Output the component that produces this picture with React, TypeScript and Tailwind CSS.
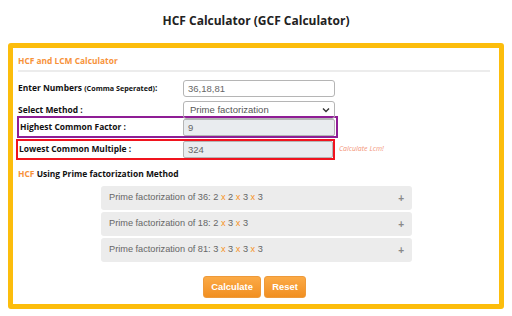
import React from 'react';

const factors = [
    { n: 36, f: [2, 2, 3, 3] },
    { n: 18, f: [2, 3, 3] },
    { n: 81, f: [3, 3, 3, 3] },
];

const label = 'text-[8.45px] font-bold text-[#111]';
const readonlyInput = "h-[17px] border border-[#b5b5b5] rounded-[2px] bg-[#e9ecef] px-[4px] text-[9.5px] text-[#666] leading-[15px] font-['Liberation_Sans',Arial,sans-serif]";
const btn = "h-[22px] rounded-[3px] border border-[#ee9a3a] bg-gradient-to-b from-[#fbaa45] to-[#f18f1f] text-white text-[9.4px] font-bold";

export default function App() {
    return (
        <div className="w-[512px] h-[316px] bg-white overflow-hidden font-['Open_Sans','Liberation_Sans',sans-serif]">
            <h1 className="h-[43px] pt-[12px] text-center text-[12px] font-bold text-[#222] leading-[18px]">
                HCF Calculator (GCF Calculator)
            </h1>

            <div className="mx-[8px] h-[266px] border-[5px] border-[#fcbd0c] rounded-[3px] px-[5px] pt-[6px]">
                <div className="text-[8.4px] font-bold text-[#f7923a] leading-[14px] pb-[2px] border-b-[2px] border-[#ececec] mr-[4px]">
                    HCF and LCM Calculator
                </div>

                {/* Form */}
                <div className="mt-[8px] flex items-center h-[17px]">
                    <div className={`w-[165px] ${label}`}>
                        Enter Numbers <span className="text-[7.2px]">(Comma Seperated)</span>:
                    </div>
                    <div className="w-[152px] h-[17px] border border-[#b5b5b5] rounded-[3px] px-[4px] text-[9.5px] text-[#666] leading-[15px] font-['Liberation_Sans',Arial,sans-serif]">
                        36,18,81
                    </div>
                </div>

                <div className="mt-[4px] flex items-center h-[18px]">
                    <div className={`w-[165px] ${label}`}>Select Method :</div>
                    <div className="w-[152px] h-[18px] border border-[#b5b5b5] rounded-[3px] pl-[6px] pr-[4px] flex items-center justify-between text-[9.5px] text-[#555] font-['Liberation_Sans',Arial,sans-serif]">
                        <span>Prime factorization</span>
                        <svg width="8" height="6" viewBox="0 0 8 6">
                            <path d="M1 1.5 L4 4.5 L7 1.5" fill="none" stroke="#333" strokeWidth="1.4" />
                        </svg>
                    </div>
                </div>

                <div className="mt-[-3px] ml-[-1px] w-[321px] h-[22px] border-2 border-[#8f1d95] flex items-center">
                    <div className={`w-[164px] pl-[1px] ${label}`}>Highest Common Factor :</div>
                    <div className={`w-[152px] ${readonlyInput}`}>9</div>
                </div>

                <div className="mt-[1px] flex items-center">
                    <div className="ml-[-2px] w-[319px] h-[21px] border-2 border-[#f0141e] flex items-center">
                        <div className={`w-[165px] pl-[1px] ${label}`}>Lowest Common Multiple :</div>
                        <div className={`w-[150px] ${readonlyInput}`}>324</div>
                    </div>
                    <span className="ml-[4px] text-[7px] italic text-[#f3957a]">Calculate Lcm!</span>
                </div>

                <div className={`mt-[7px] leading-[14px] ${label}`}>
                    <span className="text-[#f7923a]">HCF</span> Using Prime factorization Method
                </div>

                {/* Prime factorization */}
                <div className="mt-[5px] ml-[83px] w-[311px] flex flex-col gap-[2px] font-['Liberation_Sans',Arial,sans-serif]">
                    {factors.map(item => (
                        <div key={item.n} className="h-[24px] bg-[#ececec] rounded-[3px] px-[8px] flex items-center justify-between text-[9.2px] text-[#666]">
                            <span>
                                Prime factorization of {item.n}:{' '}
                                {item.f.map((x, i) => (
                                    <React.Fragment key={i}>
                                        {i > 0 && <span className="text-[#f7931e]"> x </span>}
                                        {x}
                                    </React.Fragment>
                                ))}
                            </span>
                            <span className="text-[10px] font-bold text-[#888]">+</span>
                        </div>
                    ))}
                </div>

                {/* Actions */}
                <div className="mt-[14px] flex justify-center gap-[3px] pr-[3px] font-['Liberation_Sans',Arial,sans-serif]">
                    <button className={`w-[58px] ${btn}`}>Calculate</button>
                    <button className={`w-[42px] ${btn}`}>Reset</button>
                </div>
            </div>
        </div>
    );
}
